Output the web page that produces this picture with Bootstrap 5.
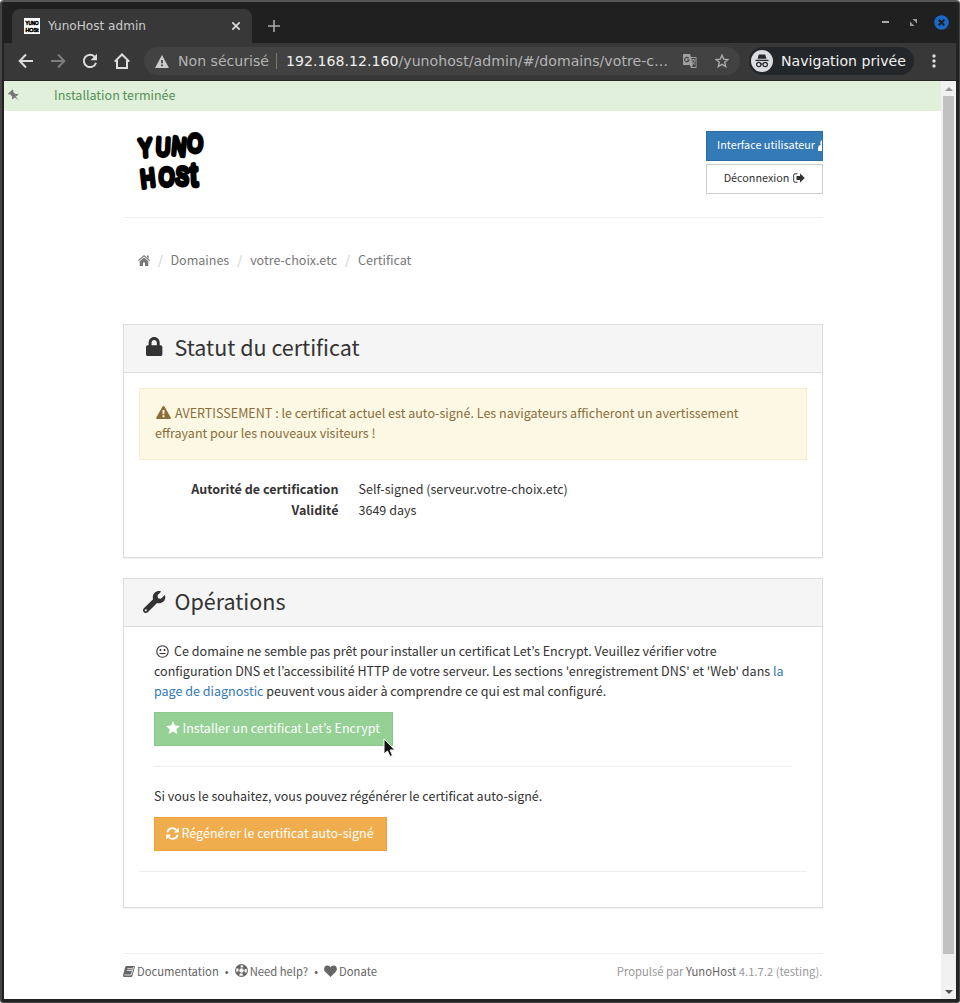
<!DOCTYPE html>
<html lang="fr">
<head>
<meta charset="utf-8">
<title>YunoHost admin</title>
<link href="https://cdn.jsdelivr.net/npm/bootstrap@5.3.0/dist/css/bootstrap.min.css" rel="stylesheet">
<script src="https://cdn.jsdelivr.net/npm/bootstrap@5.3.0/dist/js/bootstrap.bundle.min.js"></script>
<style>
*{border-radius:0}
html,body{height:1003px;overflow:hidden}
body{background:#fff;font:12.54px/20px "Noto Sans CJK KR","Noto Sans",sans-serif;color:#333}
svg{display:block;flex:none}
.win{width:960px;height:1003px;border-style:solid;border-color:#555 #444 #444 #444;border-width:2px 1px 1px 2px;border-radius:4px 4px 3px 3px;background:#222;padding:0 3px 3px 2px}
.chrome-ui{font-family:"DejaVu Sans",sans-serif;white-space:nowrap}
.tabstrip{height:41px;background:#202020;padding:7px 0 0 8px}
.tab-item{width:240px;height:34px;background:#383838;border-radius:8px 8px 0 0;color:#ccc;font-size:12.1px;padding:0 11px 0 12px}
.toolbar{height:38px;background:#383838;border-bottom:1px solid #262424;box-sizing:border-box}
.omni{width:596px;height:28px;border-radius:14px;background:#424242;font-size:14.1px;color:#b4b4b4;padding:0 11px}
.omni b{font-weight:400;color:#eee}
.incog{width:165px;height:28px;border-radius:14px;background:#24272a;color:#f1f1f1;font-size:14.1px;padding-left:2px}
.view{height:918px;background:#fff}
.sbar{width:15px;background:#f1f1f1}
.thumb{width:11px;height:858px;background:#c1c1c1}
.notice{height:30px;background:#e1f0db;color:#549057}
.content{width:700px;margin-left:119px}
.rule{height:1px;background:#eee}
.btn{border-radius:0;line-height:20px;white-space:nowrap}
.btn-side{width:117px;height:30px;font-size:10.8px;padding:0 10px}
.btn-ui{background:#337ab7;border-color:#2e6da4;color:#fff}
.btn-out{background:#fff;border-color:#ccc;color:#333}
.crumbs{color:#777;height:20px}
.crumbs i{font-style:normal;color:#ccc}
.panel{border:1px solid #ddd;box-shadow:0 1px 1px rgba(0,0,0,.05)}
.panel-title{height:48px;background:#f5f5f5;border-bottom:1px solid #ddd;font-size:21.5px;padding:0 18px}
.warn{height:72px;margin:15px 15px 0;border:1px solid #faebcc;background:#fcf8e3;color:#8a6d3b;padding:14px 15px;white-space:nowrap}
.btn-act{height:34px;font-size:12.54px;padding:0 11px}
.btn-le{width:239px;background:#95d195;border-color:#88c98b;color:#fff}
.btn-re{width:233px;background:#f0ad4e;border-color:#eea236;color:#fff}
.txt{white-space:nowrap}
.txt a{color:#337ab7;text-decoration:none}
.foot{font-size:11.26px;color:#999}
.foot .lk{color:#666}
.cursor{position:absolute;left:229px;top:26px;z-index:2}
.logo-type{font-family:"Liberation Sans",sans-serif;font-weight:400;line-height:1}
</style>
</head>
<body>
<div class="win">
 <div class="chrome-ui">
  <div class="tabstrip d-flex">
   <div class="tab-item d-flex align-items-center">
    <svg width="16" height="16" viewBox="0 0 16 16" overflow="visible"><path fill="#fff" d="M0 0h16v16H0z"/><g class="logo-type" font-size="6" stroke="#000" stroke-width=".7"><text x="1.500" y="7" textLength="13" lengthAdjust="spacingAndGlyphs">YUNO</text><text x="1.500" y="13.500" textLength="13" lengthAdjust="spacingAndGlyphs">HOSt</text></g></svg>
    <span class="ms-2">YunoHost admin</span>
    <svg class="ms-auto" width="10" height="10" viewBox="0 0 10 10" stroke="#ddd" stroke-width="1.7"><path d="M1.3 1.3l7.4 7.4M8.7 1.3l-7.4 7.4"/></svg>
   </div>
   <svg style="margin:11px 0 0 16px" width="12" height="12" viewBox="0 0 12 12" stroke="#aaa" stroke-width="1.6"><path d="M6 0v12M0 6h12"/></svg>
   <div class="ms-auto d-flex align-items-center" style="height:26px;padding-right:7px">
    <svg width="7" height="3" style="margin-right:21px"><path fill="#aaa" d="M0 0h7v2H0z"/></svg>
    <svg width="7" height="7" viewBox="0 0 7 7" style="margin-right:17px"><path fill="#999" d="M2.500 0H7v4.500zM0 2.500L4.500 7H0z"/></svg>
    <svg width="15" height="15" viewBox="0 0 15 15"><circle cx="7.500" cy="7.500" r="7.300" fill="#1a68c7"/><path d="M4.700 4.700l5.600 5.600M10.300 4.700l-5.600 5.600" stroke="#202020" stroke-width="2"/></svg>
   </div>
  </div>
  <div class="toolbar d-flex align-items-center" style="padding-bottom:1px">
   <svg width="16" height="16" viewBox="0 0 16 16" fill="none" stroke="#ddd" stroke-width="2" style="margin-left:14px"><path d="M15 8H2M8 1.500L1.700 8 8 14.500"/></svg>
   <svg width="16" height="16" viewBox="0 0 16 16" fill="none" stroke="#7d7d7d" stroke-width="2" style="margin-left:16px"><path d="M1 8h13M8 1.500L14.300 8 8 14.500"/></svg>
   <svg width="16" height="16" viewBox="0 0 16 16" style="margin-left:16px"><path d="M13 4.100A6.200 6.200 0 1 0 14 9.700" fill="none" stroke="#ddd" stroke-width="2"/><path fill="#ddd" d="M15 .8v6.500H8.500z"/></svg>
   <svg width="16" height="16" viewBox="0 0 16 16" fill="none" stroke="#ddd" stroke-width="2" style="margin-left:16px"><path d="M.7 8.600L8 1.500l7.300 7.100M3 7v8h10V7"/></svg>
   <div class="omni d-flex align-items-center" style="margin-left:14px">
    <svg width="14" height="13" viewBox="0 0 14 13"><path fill="#ccc" d="M7 0l7 13H0z"/><path fill="#383838" d="M6.200 5h1.600v3.300H6.200zM6.200 9.500h1.600v1.700H6.200z"/></svg>
    <span style="margin-left:9px">Non sécurisé</span><span style="width:1px;height:16px;background:#777;margin:0 9px 0 7px"></span>
    <span style="width:383px;letter-spacing:.03px"><b>192.168.12.160</b>/yunohost/admin/#/domains/votre-c…</span>
    <svg class="ms-auto" width="14" height="14" viewBox="0 0 14 14"><path fill="#a0a0a0" d="M0 0h7l1 3h5.500v11H8l-1-3H0z"/><path fill="#424242" d="M8.300 4h4.400v9H9l1-2z"/><path fill="none" stroke="#424242" stroke-width="1.100" d="M5.600 4.300A2.200 2.200 0 1 0 6 6H4"/><path fill="none" stroke="#a0a0a0" d="M8.500 6h4M10.500 5v1M12 6c-.5 2-1.200 3-2.500 4.200M9.500 7.500c.5 1.300 1.300 2.200 2.500 3"/></svg>
    <svg width="14" height="14" viewBox="0 0 14 14" style="margin-left:18px"><path fill="none" stroke="#aaa" stroke-width="1.400" d="M7 1.200l1.700 3.900 4.200.4-3.200 2.800 1 4.200L7 10.300l-3.700 2.200 1-4.200L1.100 5.500l4.200-.4z"/></svg>
   </div>
   <div class="incog d-flex align-items-center" style="margin-left:9px">
    <svg width="22" height="22" viewBox="0 0 22 22"><circle cx="11" cy="11" r="11" fill="#dadce0"/><path fill="#26282b" d="M7.800 4.500h6.400l1.300 4.300h-9zM4.500 9.800h13v1.100h-13z"/><g fill="none" stroke="#26282b" stroke-width="1.200"><circle cx="7.800" cy="14.500" r="2.200"/><circle cx="14.200" cy="14.500" r="2.200"/><path d="M10 14.300q1-.8 2 0"/></g></svg>
    <span style="margin-left:8px">Navigation privée</span>
   </div>
   <svg width="4" height="14" viewBox="0 0 4 14" fill="#ddd" style="margin-left:18px"><circle cx="2" cy="2" r="1.700"/><circle cx="2" cy="7" r="1.700"/><circle cx="2" cy="12" r="1.700"/></svg>
  </div>
 </div>
 <div class="view d-flex">
  <div class="flex-grow-1">
   <div class="notice d-flex">
    <svg width="11" height="11" viewBox="0 0 11 11" style="margin:8px 35px 0 4px"><path fill="#777" d="M4.500.4l1 1-.4 1.300 2.600 2.500 1.900-.5.800 1-2.800 2.100L10.800 11 6.600 8.500 4.700 10.500l-.8-.9.400-1.800L2 5.200l-1.500.3-.5-.7z"/></svg>
    <span style="padding-top:4px">Installation terminée</span>
   </div>
   <div class="content">
    <div class="d-flex justify-content-between" style="padding-top:20px;height:106px">
     <svg width="74" height="64" viewBox="0 0 74 64" overflow="visible" style="margin-left:14px"><g class="logo-type" stroke="#000" stroke-width="4.800" stroke-linejoin="round" stroke-linecap="round"><text font-size="25" transform="translate(0 23) scale(.78 1)" x="3 24 44 64" y="3 1 0 -3" rotate="-4 3 7 5">YUNO</text><text font-size="25" transform="translate(0 56) scale(.78 1)" x="6 28 49 69" y="1 -2 -3 -1" rotate="-8 3 5 -3">HOS<tspan font-size="33">t</tspan></text></g></svg>
     <div class="d-flex flex-column" style="gap:3px">
      <div class="btn btn-side btn-ui d-flex align-items-center overflow-hidden"><span style="margin-top:-4px">Interface utilisateur</span><svg width="11" height="11" viewBox="0 0 11 11" fill="#fff" style="margin:-2px 0 0 3px"><circle cx="5.500" cy="3" r="3.200"/><path d="M0 11V9q0-4 3-4h5q3 0 3 4v2z"/></svg></div>
      <div class="btn btn-side btn-out d-flex align-items-center justify-content-center"><span style="margin-top:-5px">Déconnexion</span><svg width="12" height="10" viewBox="0 0 12 10" style="margin-left:4px;margin-top:-2px"><path fill="none" stroke="#333" d="M4.500.8H2q-1.300 0-1.300 1.400v5.600q0 1.400 1.300 1.400h2.500"/><path fill="#333" d="M3.500 3H7V.6L11.800 5 7 9.400V7H3.500z"/></svg></div>
     </div>
    </div>
    <div class="rule"></div>
    <div class="crumbs d-flex align-items-center" style="margin:32px 0 54px 15px">
     <svg width="12" height="11" viewBox="0 0 12 11" fill="#777"><path d="M6 0l6 5.300-.8.800L6 1.600.8 6.100 0 5.300zM9 .6h1.700v3L9 2.100zM6 2.500l4.300 3.700V11H7V7.500H5V11H1.700V6.200z"/></svg>
     <i style="margin:0 7.500px 0 8px">/</i><span>Domaines</span><i style="margin:0 8px">/</i><span>votre-choix.etc</span><i style="margin:0 8px 0 8px">/</i><span>Certificat</span>
    </div>
    <section class="panel" style="height:234px">
     <div class="panel-title d-flex align-items-center">
      <svg width="24" height="20" viewBox="0 0 24 20" fill="#333" style="margin-top:-3px"><g transform="translate(4 0) scale(.0365 .0371)"><path d="M400 224h-24v-72C376 68.200 307.800 0 224 0S72 68.200 72 152v72H48c-26.500 0-48 21.500-48 48v192c0 26.500 21.500 48 48 48h352c26.500 0 48-21.500 48-48V272c0-26.500-21.500-48-48-48zm-104 0H152v-72c0-39.700 32.300-72 72-72s72 32.300 72 72v72z"/></g></svg>
      <span style="margin:-4px 0 0 8.500px">Statut du certificat</span>
     </div>
     <div class="warn"><svg class="d-inline-block" width="15" height="13" viewBox="0 0 15 13" style="margin:0 4px 0 1px;vertical-align:-1px"><path fill="#8a6d3b" d="M7.500 0q.7 0 1 .6l6.200 11q.5 1.400-1 1.400H1.300q-1.500 0-1-1.400l6.200-11q.3-.6 1-.6z"/><path fill="#fcf8e3" d="M6.400 4h2.200l-.3 4.300H6.700zM6.500 9.200h2v2h-2z"/></svg><span style="letter-spacing:.008px">AVERTISSEMENT : le certificat actuel est auto-signé. Les navigateurs afficheront un avertissement</span><br>effrayant pour les nouveaux visiteurs !</div>
     <div class="d-flex" style="margin-top:18px;line-height:21px;gap:20px">
      <div class="text-end fw-bold" style="width:214.500px;letter-spacing:.03px">Autorité de certification<br>Validité</div>
      <div>Self-signed (serveur.votre-choix.etc)<br>3649 days</div>
     </div>
    </section>
    <section class="panel" style="height:330px;margin-top:20px">
     <div class="panel-title d-flex align-items-center">
      <svg width="24" height="22" viewBox="0 0 24 22" fill="#333" style="margin-top:-2px"><g transform="translate(1 0) scale(.0435 .043)"><path d="M507.730 109.100c-2.240-9.030-13.540-12.090-20.120-5.510l-74.360 74.360-67.880-11.310-11.310-67.880 74.360-74.360c6.620-6.620 3.430-17.900-5.660-20.160-47.380-11.740-99.550.91-136.580 37.930-39.640 39.640-50.550 97.100-34.050 147.200L18.740 402.760c-24.990 24.990-24.990 65.510 0 90.500 24.990 24.990 65.510 24.990 90.500 0l213.210-213.210c50.120 16.710 107.470 5.680 147.370-34.220 37.070-37.070 49.700-89.320 37.910-136.730zM64 472c-13.250 0-24-10.750-24-24 0-13.260 10.750-24 24-24s24 10.740 24 24c0 13.250-10.750 24-24 24z"/></g></svg>
      <span style="margin:-4px 0 0 8.500px">Opérations</span>
     </div>
     <div class="position-relative" style="margin:14px 30px 0">
      <div class="txt"><svg class="d-inline-block" width="13" height="13" viewBox="0 0 13 13" fill="none" stroke="#333" stroke-width="1.100" style="margin:0 5px 0 2px;vertical-align:-2px"><circle cx="6.500" cy="6.500" r="5.700"/><path d="M3.500 8.500h6"/><path stroke-width="1.600" d="M4.500 4v2M8.500 4v2"/></svg><span style="letter-spacing:.01px">Ce domaine ne semble pas prêt pour installer un certificat Let’s Encrypt. Veuillez vérifier votre</span><br>configuration DNS et l’accessibilité HTTP de votre serveur. Les sections 'enregistrement DNS' et 'Web' dans <a href="#">la<br>page de diagnostic</a> peuvent vous aider à comprendre ce qui est mal configuré.</div>
      <div class="position-relative" style="margin-top:11px">
       <div class="btn btn-act btn-le d-flex align-items-center"><svg width="14" height="13" viewBox="0 0 14 13" fill="#fff" style="margin-top:-3px"><path d="M7 0l2 4.400 5 .6-3.700 3.300 1 4.700L7 10.600 2.700 13l1-4.700L0 5l5-.6z"/></svg><span style="margin:-2px 0 0 2.500px">Installer un certificat Let’s Encrypt</span></div>
       <svg class="cursor" width="14" height="20" viewBox="0 0 14 20"><path fill="#111" stroke="#fff" d="M1 1v15l3.500-3 2.500 5.500 2.500-1-2.400-5.500h4.700z"/></svg>
      </div>
      <div class="rule" style="margin:20px 0 19px"></div>
      <div class="txt">Si vous le souhaitez, vous pouvez régénérer le certificat auto-signé.</div>
      <div class="btn btn-act btn-re d-flex align-items-center" style="margin-top:11px"><svg width="13" height="13" viewBox="0 0 13 13" style="margin-top:-2px"><path fill="none" stroke="#fff" stroke-width="1.900" d="M1.300 5.200A5.200 5.200 0 0 1 10.300 3M11.700 7.800A5.200 5.200 0 0 1 2.700 10"/><path fill="#fff" d="M12.800.5v5H7.800zM.2 12.500v-5h5z"/></svg><span style="margin:-2px 0 0 2.500px">Régénérer le certificat auto-signé</span></div>
     </div>
     <div class="rule" style="margin:20px 15px 0"></div>
    </section>
    <div class="rule" style="margin-top:45px"></div>
    <footer class="foot d-flex align-items-center txt" style="margin-top:7px">
     <div class="lk d-flex align-items-center">
      <svg width="12" height="11" viewBox="0 0 12 11"><path fill="#666" d="M3.300 0H11q1.200 0 .8 1.300L9.500 9.500Q9.200 11 8 11H1.300Q-.3 11 .1 9.300L2 1.500Q2.300 0 3.300 0z"/><path stroke="#fff" stroke-width=".8" fill="none" d="M4.400 2.700h5M3.900 4.500h5M1.500 9h6.700L10.500 1"/></svg><span style="margin:0 6px 0 2px">Documentation</span><span>•</span>
      <svg width="13" height="13" viewBox="0 0 13 13" fill="none" stroke="#666" style="margin:-1px 2px 0 6px"><circle cx="6.500" cy="6.500" r="5.900" stroke-width="1.100"/><circle cx="6.500" cy="6.500" r="2.700"/><path stroke-width="3" stroke-dasharray="3.400 3.355" stroke-dashoffset="-1.680" d="M6.500 2.200a4.300 4.300 0 1 1 0 8.600a4.300 4.300 0 1 1 0-8.600"/></svg><span>Need help?</span><span style="margin:0 6px 0 6px">•</span>
      <svg width="13" height="12" viewBox="0 0 13 12" fill="#666"><path d="M6.500 12L1 6.500C-.7 4.500 0 .5 3.300.5 5 .5 6 1.500 6.500 2.300 7 1.500 8 .5 9.700.5 13 .5 13.700 4.500 12 6.500z"/></svg><span style="margin-left:2px;letter-spacing:.05px">Donate</span>
     </div>
     <div class="ms-auto" style="margin-right:.5px">Propulsé par <span class="lk">YunoHost</span> 4.1.7.2 (testing).</div>
    </footer>
   </div>
  </div>
  <div class="sbar d-flex flex-column align-items-center" style="padding:6px 0 5px">
   <svg width="8" height="4"><path fill="#999" d="M0 4l4-4 4 4z"/></svg>
   <div class="thumb" style="margin-top:5px"></div>
   <svg class="mt-auto" width="8" height="4"><path fill="#505050" d="M0 0h8L4 4z"/></svg>
  </div>
 </div>
</div>
</body>
</html>
